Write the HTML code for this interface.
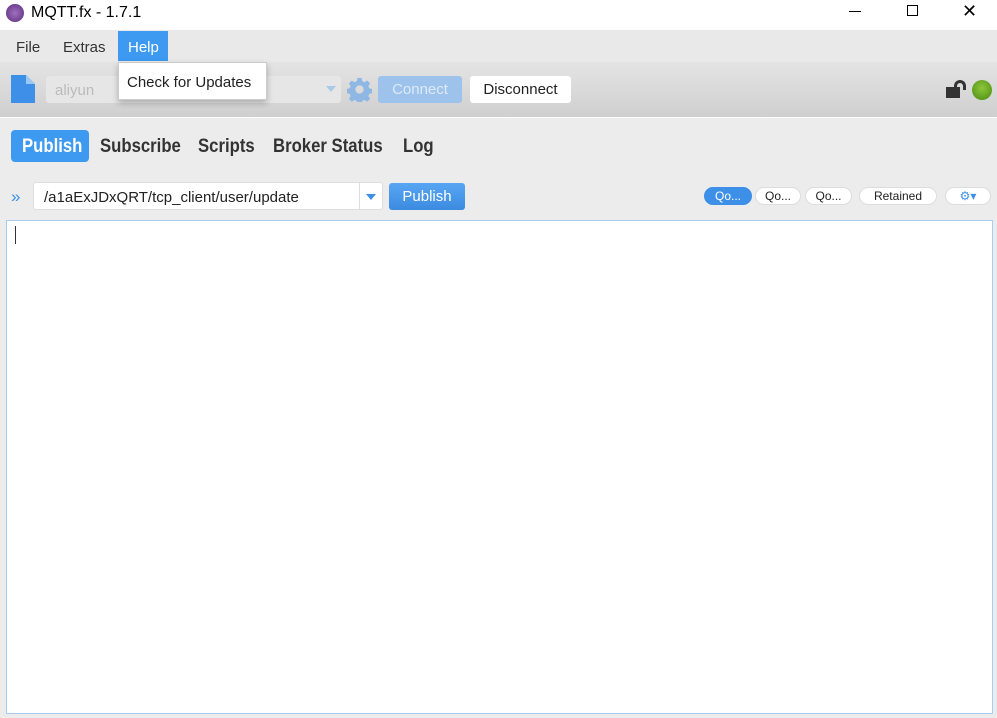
<!DOCTYPE html>
<html><head><style>
*{margin:0;padding:0;box-sizing:border-box}
body{width:997px;height:718px;overflow:hidden;background:#ececec;font-family:"Liberation Sans",sans-serif;position:relative}
.a{position:absolute}
.title{top:0;left:0;width:997px;height:30px;background:#fff}
.menu{top:30px;left:0;width:997px;height:32px;background:#e9e9e9}
.tool{top:62px;left:0;width:997px;height:56px;background:linear-gradient(#e4e4e4,#cfcfcf);border-bottom:1px solid #fff}
.tab{font-size:19px;font-weight:bold;color:#333;top:136px;transform:scaleX(0.88);transform-origin:left;white-space:nowrap}
.pill{height:18px;border-radius:9px;background:#fff;font-size:12px;text-align:center;line-height:17px;color:#222;border:1px solid #ddd;top:187px}
</style></head><body>
<div class="a title"></div>
<div class="a" style="left:6px;top:4px;width:18px;height:18px;border-radius:50%;background:radial-gradient(#a070c0,#5a2c7a)"></div>
<div class="a" style="left:31px;top:4px;font-size:16px;color:#000">MQTT.fx - 1.7.1</div>
<div class="a" style="left:849px;top:11px;width:12px;height:1px;background:#000"></div>
<div class="a" style="left:907px;top:5px;width:11px;height:11px;border:1px solid #000"></div>
<div class="a" style="left:962px;top:1px;font-size:18px">✕</div>
<div class="a menu"></div>
<div class="a" style="left:16px;top:39px;font-size:15px;color:#333">File</div>
<div class="a" style="left:63px;top:39px;font-size:15px;color:#333">Extras</div>
<div class="a" style="left:118px;top:31px;width:50px;height:30px;background:#3d9af0;color:#fff;font-size:15px;padding:8px 0 0 10px">Help</div>
<div class="a tool"></div>
<svg class="a" style="left:11px;top:75px" width="24" height="28"><path d="M0 0H15L24 9V28H0Z" fill="#3d8fe8"/><path d="M15 0V9H24" fill="#9cc8f5"/></svg>
<div class="a" style="left:46px;top:76px;width:295px;height:27px;background:#e6e6e6;border-radius:3px;color:#bbb;font-size:15px;padding:6px 0 0 9px">aliyun</div>
<div class="a" style="left:326px;top:86px;border:5px solid transparent;border-top:6px solid #aac8ea"></div>
<svg class="a" style="left:347px;top:77px" width="25" height="25" viewBox="0 0 24 24"><path fill="#8fb7e3" d="M10 1h4l.6 3 2.2 1 2.6-1.7 2.8 2.8-1.7 2.6 1 2.2 3 .6v4l-3 .6-1 2.2 1.7 2.6-2.8 2.8-2.6-1.7-2.2 1-.6 3h-4l-.6-3-2.2-1-2.6 1.7-2.8-2.8 1.7-2.6-1-2.2-3-.6v-4l3-.6 1-2.2-1.7-2.6 2.8-2.8 2.6 1.7 2.2-1zM12 8a4 4 0 100 8 4 4 0 000-8z"/></svg>
<div class="a" style="left:378px;top:76px;width:84px;height:27px;background:#9dc3ec;border-radius:3px;color:#dde9f7;font-size:15px;text-align:center;line-height:28px">Connect</div>
<div class="a" style="left:470px;top:76px;width:101px;height:27px;background:#fff;border-radius:3px;color:#222;font-size:15px;text-align:center;line-height:28px">Disconnect</div>
<div class="a" style="left:946px;top:87px;width:14px;height:11px;background:#333"></div>
<div class="a" style="left:954px;top:80px;width:12px;height:10px;border:3px solid #333;border-bottom:none;border-radius:6px 6px 0 0"></div>
<div class="a" style="left:972px;top:80px;width:20px;height:20px;border-radius:50%;background:radial-gradient(circle at 50% 40%,#8cc63a,#4a8a10)"></div>
<div class="a" style="left:118px;top:62px;width:149px;height:38px;background:#fff;border:1px solid #ccc;box-shadow:0 3px 6px rgba(0,0,0,.25);font-size:15px;color:#222;padding:11px 0 0 8px">Check for Updates</div>
<div class="a" style="left:11px;top:130px;width:78px;height:32px;background:#3d9af0;border-radius:4px"></div>
<div class="a tab" style="left:22px;color:#fff">Publish</div>
<div class="a tab" style="left:100px">Subscribe</div>
<div class="a tab" style="left:198px">Scripts</div>
<div class="a tab" style="left:273px">Broker Status</div>
<div class="a tab" style="left:403px">Log</div>
<div class="a" style="left:11px;top:187px;font-size:17px;color:#3d8fe8">»</div>
<div class="a" style="left:33px;top:182px;width:350px;height:28px;background:#fff;border:1px solid #ddd;border-radius:3px;font-size:15px;color:#222;padding:6px 0 0 10px">/a1aExJDxQRT/tcp_client/user/update</div>
<div class="a" style="left:359px;top:183px;width:1px;height:26px;background:#ddd"></div>
<div class="a" style="left:366px;top:194px;border:5px solid transparent;border-top:6px solid #3d8fe8"></div>
<div class="a" style="left:389px;top:183px;width:76px;height:27px;background:linear-gradient(#58a6f2,#3b8be0);border-radius:3px;color:#fff;font-size:15px;text-align:center;line-height:28px">Publish</div>
<div class="a pill" style="left:704px;width:48px;background:#3d8fe8;color:#fff;border-color:#3d8fe8">Qo...</div>
<div class="a pill" style="left:755px;width:46px">Qo...</div>
<div class="a pill" style="left:805px;width:47px">Qo...</div>
<div class="a pill" style="left:859px;width:78px">Retained</div>
<div class="a pill" style="left:945px;width:46px;color:#3d8fe8">⚙▾</div>
<div class="a" style="left:6px;top:220px;width:987px;height:494px;background:#fff;border:1px solid #a9cdf0"></div>
<div class="a" style="left:15px;top:226px;width:1px;height:18px;background:#333"></div>
</body></html>
